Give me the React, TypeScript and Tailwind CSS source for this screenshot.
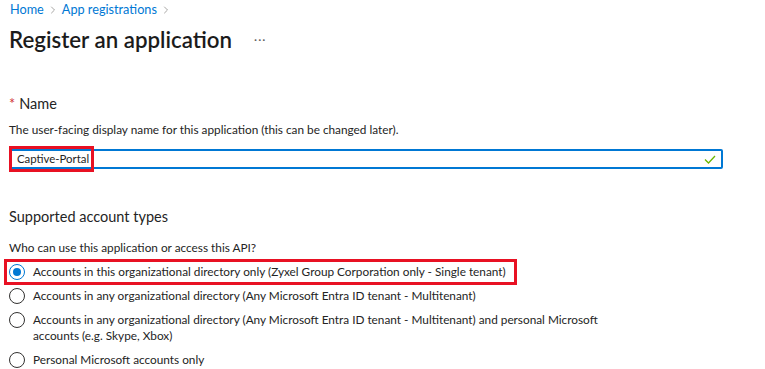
import { ChevronRight } from "lucide-react"

const options = [
  { label: "Accounts in this organizational directory only (Zyxel Group Corporation only - Single tenant)", checked: true },
  { label: "Accounts in any organizational directory (Any Microsoft Entra ID tenant - Multitenant)" },
  {
    label:
      "Accounts in any organizational directory (Any Microsoft Entra ID tenant - Multitenant) and personal Microsoft accounts (e.g. Skype, Xbox)",
  },
  { label: "Personal Microsoft accounts only" },
]

export default function App() {
  return (
    <div className="w-[765px] h-[369px] overflow-hidden bg-white text-[#242424] font-['Lato','Open_Sans',sans-serif]">
      {/* Breadcrumb */}
      <nav className="flex items-center gap-[3px] pl-[10px] pt-[1px] h-[19px] text-[12.7px] text-[#0078d4]">
        <span>Home</span>
        <ChevronRight className="w-3 h-3 text-[#8a8886]" strokeWidth={1.5} />
        <span>App registrations</span>
        <ChevronRight className="w-3 h-3 text-[#8a8886]" strokeWidth={1.5} />
      </nav>

      {/* Title */}
      <div className="flex items-center pl-[9px] h-[42px]">
        <h1 className="text-[22.3px] font-semibold text-[#1b1b1b]">Register an application</h1>
        <span className="ml-[22px] text-[12px] text-[#605e5c] tracking-[1px]">···</span>
      </div>

      {/* Name */}
      <div className="pl-[9px] pt-[32px]">
        <div className="flex items-center gap-1 text-[14.5px] h-[22px]">
          <span className="text-[#d13438]">*</span>
          <span>Name</span>
        </div>
        <p className="mt-[6px] text-[11.8px] h-[18px]">
          The user-facing display name for this application (this can be changed later).
        </p>
        <div className="relative mt-[10px] w-[714px] h-[20px] border-2 border-[#0078d4] rounded-[2px] flex items-center pl-[6px] pr-[5px] text-[11.4px]">
          <span>Captive-Portal</span>
          <svg className="ml-auto" width="12" height="9" viewBox="0 0 12 9" fill="none">
            <path d="M1 4.5 L4.5 8 L11 1" stroke="#6bb700" strokeWidth="1.3" />
          </svg>
          <div className="absolute -left-[2px] -top-[5px] w-[85px] h-[26px] border-[3px] border-[#e81123]" />
        </div>
      </div>

      {/* Supported account types */}
      <div className="pl-[9px] pt-[37px]">
        <h2 className="text-[14.5px] h-[22px]">Supported account types</h2>
        <p className="mt-[11px] text-[11.8px] h-[18px]">Who can use this application or access this API?</p>
        <div className="mt-[3px] flex flex-col">
          {options.map((o) => (
            <label key={o.label} className="relative flex items-start gap-[8px] py-[4px] text-[11.8px] leading-[16px]">
              <span
                className={`shrink-0 w-[16px] h-[16px] rounded-full border flex items-center justify-center ${
                  o.checked ? "border-[#0078d4]" : "border-[#323130]"
                }`}
              >
                {o.checked && <span className="w-[8px] h-[8px] rounded-full bg-[#0078d4]" />}
              </span>
              <span className="max-w-[590px]">{o.label}</span>
              {o.checked && (
                <span className="absolute -left-[5px] -top-[1px] w-[513px] h-[26px] border-[3px] border-[#e81123]" />
              )}
            </label>
          ))}
        </div>
      </div>
    </div>
  )
}
